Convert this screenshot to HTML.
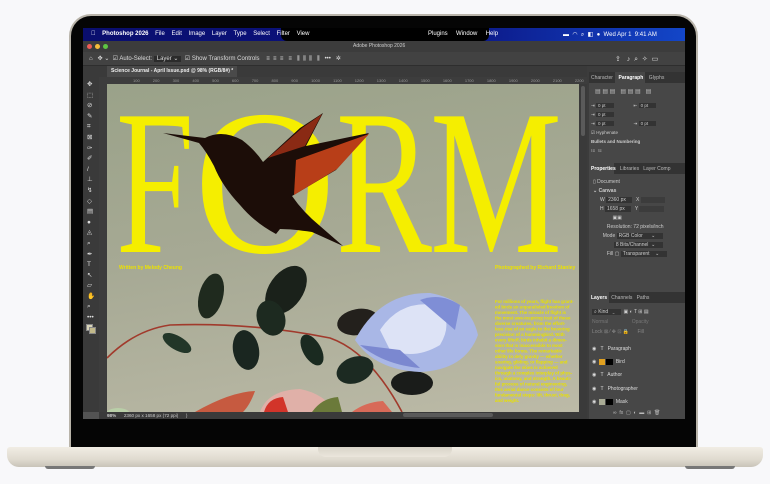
<!DOCTYPE html>
<html><head><meta charset="utf-8"><style>
*{margin:0;padding:0;box-sizing:border-box}
body{width:770px;height:484px;background:#f8f8fa;position:relative;overflow:hidden;font-family:"Liberation Sans",sans-serif}
.a{position:absolute}
.t{font-size:5px;color:#ddd;white-space:nowrap}
</style></head><body>
<div class="a" style="left:69px;top:14px;width:629px;height:440px;border-radius:22px 22px 4px 4px;background:#b9b4aa"></div>
<div class="a" style="left:71px;top:16px;width:625px;height:438px;border-radius:20px 20px 3px 3px;background:#050505"></div>
<div class="a" style="left:7px;top:447px;width:756px;height:20px;border-radius:3px 3px 12px 12px;background:linear-gradient(#f1ede4,#e0dbd0 60%,#c8c3b8)"></div>
<div class="a" style="left:318px;top:447px;width:134px;height:10px;border-radius:0 0 8px 8px;background:linear-gradient(#d8d3c8,#ebe6dc)"></div>
<div class="a" style="left:45px;top:466px;width:50px;height:3px;border-radius:0 0 3px 3px;background:#777"></div>
<div class="a" style="left:685px;top:466px;width:50px;height:3px;border-radius:0 0 3px 3px;background:#777"></div>
<div class="a" style="left:83px;top:28px;width:602px;height:391px;background:#535353;overflow:hidden">
 <div class="a" style="left:0;top:0;width:602px;height:13px;background:linear-gradient(90deg,#0a0e6e,#0b1380 60%,#1346c8)"></div>
 <div class="a" style="left:198px;top:0;width:208px;height:13px;background:#000;border-radius:0 0 6px 6px"></div>
 <div class="a t" style="left:8px;top:3px;font-size:6px;color:#fff">&#63743;&nbsp;&nbsp;&nbsp;&nbsp;<b>Photoshop 2026</b>&nbsp;&nbsp;&nbsp;&nbsp;File&nbsp;&nbsp;&nbsp;&nbsp;Edit&nbsp;&nbsp;&nbsp;&nbsp;Image&nbsp;&nbsp;&nbsp;&nbsp;Layer&nbsp;&nbsp;&nbsp;&nbsp;Type&nbsp;&nbsp;&nbsp;&nbsp;Select&nbsp;&nbsp;&nbsp;&nbsp;Filter&nbsp;&nbsp;&nbsp;&nbsp;View</div>
 <div class="a t" style="left:345px;top:3px;font-size:6px;color:#fff">Plugins&nbsp;&nbsp;&nbsp;&nbsp;&nbsp;Window&nbsp;&nbsp;&nbsp;&nbsp;&nbsp;Help</div>
 <div class="a t" style="left:480px;top:3px;font-size:6px;color:#fff">▬&nbsp;&nbsp;◠&nbsp;&nbsp;⌕&nbsp;&nbsp;◧&nbsp;&nbsp;●&nbsp;&nbsp;Wed Apr 1&nbsp; 9:41 AM</div>
 <div class="a" style="left:0;top:13px;width:602px;height:11px;background:#3c3c3c"></div>
 <div class="a" style="left:4px;top:16px;width:5px;height:5px;border-radius:50%;background:#ee5c55"></div>
 <div class="a" style="left:12px;top:16px;width:5px;height:5px;border-radius:50%;background:#f5bd3b"></div>
 <div class="a" style="left:20px;top:16px;width:5px;height:5px;border-radius:50%;background:#5ec543"></div>
 <div class="a t" style="left:270px;top:15px;color:#ccc">Adobe Photoshop 2026</div>
 <div class="a" style="left:0;top:24px;width:602px;height:14px;background:#424242;border-bottom:1px solid #2e2e2e"></div>
 <div class="a t" style="left:6px;top:27px;font-size:6px;color:#ddd">⌂&nbsp;&nbsp;&nbsp;✥ ⌄&nbsp;&nbsp;☑ Auto-Select: <span style="background:#2b2b2b;padding:0 3px">Layer ⌄</span>&nbsp;&nbsp;☑ Show Transform Controls&nbsp;&nbsp;&nbsp;&nbsp;≡&nbsp;&nbsp;≡&nbsp;&nbsp;≡&nbsp;&nbsp;&nbsp;≡&nbsp;&nbsp;&nbsp;⫼&nbsp;&nbsp;⫼&nbsp;&nbsp;⫼&nbsp;&nbsp;&nbsp;⫼&nbsp;&nbsp;&nbsp;•••&nbsp;&nbsp;&nbsp;✲</div>
 <div class="a t" style="left:532px;top:27px;font-size:7px;color:#ddd">⇪&nbsp;&nbsp;&nbsp;♪&nbsp;&nbsp;⌕&nbsp;&nbsp;✧&nbsp;&nbsp;▭</div>
 <div class="a" style="left:16px;top:38px;width:488px;height:11px;background:#3a3a3a"></div>
 <div class="a" style="left:24px;top:38px;width:130px;height:11px;background:#4a4a4a"></div>
 <div class="a t" style="left:28px;top:40px;color:#eee;font-weight:bold">Science Journal - April Issue.psd @ 98% (RGB/8#) *</div>
 <div class="a" style="left:16px;top:49px;width:488px;height:7px;background:#3d3d3d"></div>
 <div class="a t" style="left:50px;top:50px;font-size:4px;color:#999;word-spacing:12px">100 200 300 400 500 600 700 800 900 1000 1100 1200 1300 1400 1500 1600 1700 1800 1900 2000 2100 2200 2300</div>
 <div class="a" style="left:16px;top:56px;width:8px;height:328px;background:#3d3d3d"></div>
 <div class="a" style="left:0;top:38px;width:16px;height:346px;background:#3a3a3a"></div>
 <div class="a t" style="left:4px;top:52px;font-size:6.5px;line-height:10.6px;color:#ddd;white-space:pre">✥
⬚
⊘
✎
⌗
⊠
✑
✐
/
⊥
↯
◇
▤
●
◬
⌕
✒
T
↖
▱
✋
⌕
•••</div>
 <div class="a" style="left:3px;top:296px;width:7px;height:7px;background:#d8d4b8;border:1px solid #888"></div>
 <div class="a" style="left:6px;top:299px;width:7px;height:7px;background:#c2b98a;border:1px solid #888"></div>
 <div class="a" style="left:24px;top:56px;width:472px;height:328px;background:linear-gradient(170deg,#9aa289,#a6a994 45%,#bcbaa7 100%);overflow:hidden">
  <svg width="472" height="328" viewBox="107 84 472 328" style="position:absolute;left:0;top:0">
   <g font-family="Liberation Serif,serif" font-size="150" fill="#f5ee00" transform="scale(1,1.38)">
    <text x="116" y="182.6" textLength="78" lengthAdjust="spacingAndGlyphs">F</text>
    <text x="194" y="182.6" textLength="142" lengthAdjust="spacingAndGlyphs">O</text>
    <text x="336" y="182.6" textLength="96" lengthAdjust="spacingAndGlyphs">R</text>
    <text x="430" y="182.6" textLength="132" lengthAdjust="spacingAndGlyphs">M</text>
   </g>
   <path d="M163,133 L205,138 Q222,129 242,140 Q255,150 263,162 L300,128 L323,113 L306,146 L369,133 L336,170 L292,196 Q303,212 320,226 L343,246 L312,232 Q292,229 280,229 L276,234 Q255,223 240,205 Q222,186 214,166 Q206,151 199,143 Z" fill="#1c0d08"/>
   <path d="M268,158 L302,128 L322,114 L305,146 Z" fill="#8a2a14"/>
   <path d="M296,160 L369,134 L337,169 L294,195 Z" fill="#b83e18"/>
   <text x="119" y="269" font-size="5" fill="#ece200" font-weight="bold">Written by Melody Cheung</text>
   <text x="495" y="269" font-size="5" fill="#ece200" font-weight="bold">Photographed by Richard Stanley</text>
   <g font-size="4.4" fill="#e8e000" font-weight="bold">
    <text x="495" y="303">For millions of years, flight has grant-</text>
    <text x="495" y="308.5">ed birds an unparalleled freedom of</text>
    <text x="495" y="314">movement. The miracle of flight is</text>
    <text x="495" y="319.5">the most awe-inspiring trait of these</text>
    <text x="495" y="325">diverse creatures, from the effort-</text>
    <text x="495" y="330.5">less rise of an eagle to the hovering</text>
    <text x="495" y="336">precision of a hummingbird. With</text>
    <text x="495" y="341.5">every liftoff, birds inhabit a dimen-</text>
    <text x="495" y="347">sion that is inaccessible to most</text>
    <text x="495" y="352.5">other life forms. The remarkable</text>
    <text x="495" y="358">ability to defy gravity — whether</text>
    <text x="495" y="363.5">soaring, gliding, or flapping — and</text>
    <text x="495" y="369">navigate the skies is achieved</text>
    <text x="495" y="374.5">through a complex interplay of phys-</text>
    <text x="495" y="380">ics, anatomy, and strength. A beauti-</text>
    <text x="495" y="385.5">ful process of natural engineering,</text>
    <text x="495" y="391">this aerial dance consists of four</text>
    <text x="495" y="396.5">fundamental steps: lift, thrust, drag,</text>
    <text x="495" y="402">and weight.</text>
   </g>
   <path d="M107,358 Q135,330 170,325 Q250,322 330,338 Q370,352 402,412" stroke="#a13a2c" stroke-width="1.6" fill="none"/>
   <ellipse cx="211" cy="296" rx="12" ry="23" transform="rotate(15 211 296)" fill="#1f2a1e"/>
   <ellipse cx="286" cy="290" rx="17" ry="27" transform="rotate(35 286 290)" fill="#1a211a"/>
   <ellipse cx="271" cy="318" rx="14" ry="18" transform="rotate(-20 271 318)" fill="#1d2a20"/>
   <ellipse cx="246" cy="350" rx="13" ry="20" transform="rotate(-10 246 350)" fill="#1a2620"/>
   <ellipse cx="177" cy="343" rx="16" ry="7" transform="rotate(30 177 343)" fill="#223628"/>
   <ellipse cx="358" cy="322" rx="21" ry="13" transform="rotate(-10 358 322)" fill="#23201c"/>
   <ellipse cx="355" cy="370" rx="19" ry="13" transform="rotate(-20 355 370)" fill="#1c2a22"/>
   <ellipse cx="412" cy="383" rx="21" ry="12" fill="#1a1c1a"/>
   <ellipse cx="312" cy="350" rx="9" ry="17" transform="rotate(-30 312 350)" fill="#1a2a20"/>
   <path d="M355,340 Q380,292 430,293 Q470,300 478,335 Q465,370 420,372 Q375,370 355,340 Z" fill="#a9b7e6"/>
   <path d="M380,330 Q400,300 435,305 Q455,320 440,345 Q415,360 390,350 Z" fill="#dde3f6"/>
   <path d="M420,300 Q440,292 460,305 L455,330 Z" fill="#7f8ed6"/>
   <path d="M360,345 Q385,365 420,368 L400,350 Z" fill="#7b88d0"/>
   <path d="M195,412 Q230,392 255,391 Q250,405 243,412 Z" fill="#c65a40"/>
   <path d="M260,412 Q268,390 300,389 Q325,394 335,412 Z" fill="#e0b0a8"/>
   <path d="M264,412 Q268,398 283,397 L288,412 Z" fill="#d2342a"/>
   <path d="M312,412 Q322,398 338,397 L342,412 Z" fill="#6b7a3a"/>
   <path d="M352,412 Q365,402 383,401 L392,412 Z" fill="#d86a58"/>
   <ellipse cx="118" cy="414" rx="12" ry="6" fill="#b9cfa8"/>
  </svg>
 </div>
 <div class="a" style="left:496px;top:56px;width:8px;height:328px;background:#3a3a3a"></div>
 <div class="a" style="left:498px;top:58px;width:4px;height:50px;background:#5a5a5a;border-radius:2px"></div>
 <div class="a" style="left:16px;top:384px;width:488px;height:7px;background:#3a3a3a"></div>
 <div class="a t" style="left:24px;top:385px;font-size:4.6px;color:#ccc"><b>98%</b>&nbsp;&nbsp;&nbsp;&nbsp;&nbsp;&nbsp;2360 px x 1658 px (72 ppi)&nbsp;&nbsp;&nbsp;&nbsp;&nbsp;&nbsp;)</div>
 <div class="a" style="left:320px;top:385px;width:90px;height:4px;background:#5a5a5a;border-radius:2px"></div>
 <div class="a" style="left:504px;top:38px;width:98px;height:353px;background:#3c3c3c"></div>
 <div class="a" style="left:506px;top:44px;width:96px;height:11px;background:#333"></div>
 <div class="a" style="left:532px;top:44px;width:30px;height:11px;background:#474747"></div>
 <div class="a t" style="left:508px;top:47px;font-size:5px;color:#bbb">Character&nbsp;&nbsp;&nbsp;&nbsp;<b style="color:#fff">Paragraph</b>&nbsp;&nbsp;&nbsp;&nbsp;Glyphs</div>
 <div class="a" style="left:506px;top:55px;width:96px;height:80px;background:#474747"></div>
 <div class="a t" style="left:512px;top:60px;font-size:6px;color:#bbb">▤ ▤ ▤&nbsp;&nbsp;&nbsp;▤ ▤ ▤&nbsp;&nbsp;&nbsp;▤</div>
 <div class="a t" style="left:508px;top:73px;font-size:4.5px;color:#ccc;line-height:9px;white-space:pre">⇥ <span style="background:#333;padding:0 8px 0 2px">0 pt</span>                ⇤ <span style="background:#333;padding:0 8px 0 2px">0 pt</span>
⇥ <span style="background:#333;padding:0 8px 0 2px">0 pt</span>
⇥ <span style="background:#333;padding:0 8px 0 2px">0 pt</span>                ⇥ <span style="background:#333;padding:0 8px 0 2px">0 pt</span>
☑ Hyphenate
<b>Bullets and Numbering</b>
⁝≡  ⁝≡</div>
 <div class="a" style="left:506px;top:135px;width:96px;height:11px;background:#333"></div>
 <div class="a" style="left:506px;top:135px;width:25px;height:11px;background:#474747"></div>
 <div class="a t" style="left:508px;top:138px;font-size:5px;color:#bbb"><b style="color:#fff">Properties</b>&nbsp;&nbsp;&nbsp;Libraries&nbsp;&nbsp;&nbsp;Layer Comp</div>
 <div class="a" style="left:506px;top:146px;width:96px;height:118px;background:#474747"></div>
 <div class="a t" style="left:510px;top:150px;font-size:5px;color:#ccc;line-height:9px;white-space:pre">▯ Document
<b>⌄ Canvas</b>
     W <span style="background:#333;padding:0 6px 0 2px">2360 px</span>   X <span style="background:#3c3c3c;padding:0 10px">   </span>
     H <span style="background:#333;padding:0 6px 0 2px">1658 px</span>   Y <span style="background:#3c3c3c;padding:0 10px">   </span>
              ▣▣
          Resolution: 72 pixels/inch
       Mode <span style="background:#333;padding:0 8px 0 2px">RGB Color      ⌄</span>
               <span style="background:#333;padding:0 8px 0 2px">8 Bits/Channel  ⌄</span>
          Fill ▢ <span style="background:#333;padding:0 8px 0 2px">Transparent    ⌄</span></div>
 <div class="a" style="left:506px;top:264px;width:96px;height:11px;background:#333"></div>
 <div class="a" style="left:506px;top:264px;width:20px;height:11px;background:#474747"></div>
 <div class="a t" style="left:508px;top:267px;font-size:5px;color:#bbb"><b style="color:#fff">Layers</b>&nbsp;&nbsp;&nbsp;Channels&nbsp;&nbsp;&nbsp;Paths</div>
 <div class="a" style="left:506px;top:275px;width:96px;height:116px;background:#474747"></div>
 <div class="a t" style="left:509px;top:279px;font-size:5px;color:#ccc;line-height:10px;white-space:pre"><span style="background:#333;padding:0 6px 0 2px">⌕ Kind   ⌄</span>  ▣ ◐ T ⊞ ▤
<span style="color:#777">Normal                 Opacity</span>
<span style="color:#888">Lock ⊠ ⁄ ✥ ⊡ 🔒      Fill</span></div>
 <div class="a t" style="left:509px;top:315px;font-size:5px;color:#ddd;line-height:13.2px;white-space:pre">◉   T   Paragraph
◉  <span style="background:#e0a020">&nbsp;&nbsp;&nbsp;&nbsp;</span> <span style="background:#000">&nbsp;&nbsp;&nbsp;&nbsp;&nbsp;</span>  Bird
◉   T   Author
◉   T   Photographer
◉  <span style="background:#a9ab95">&nbsp;&nbsp;&nbsp;&nbsp;</span> <span style="background:#000">&nbsp;&nbsp;&nbsp;&nbsp;&nbsp;</span>  Mask</div>
 <div class="a t" style="left:530px;top:382px;font-size:5px;color:#bbb">∞&nbsp; fx&nbsp; ▢&nbsp; ◐&nbsp; ▬&nbsp; ⊞&nbsp; 🗑</div>
</div>
</body></html>
